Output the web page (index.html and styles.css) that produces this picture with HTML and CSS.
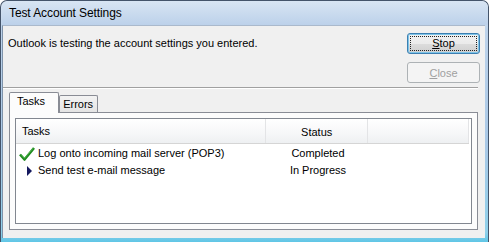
FILE: index.html
```html
<!DOCTYPE html>
<html>
<head>
    <title>Test Account Settings</title>
    <link rel="stylesheet" href="styles.css">
</head>
<body>

    <div class="window">
        <div class="titlebar">Test Account Settings</div>

        <div class="client">
            <div class="top">
                <p class="message">Outlook is testing the account settings you entered.</p>
                <div class="buttons">
                    <button class="btn default"><span class="focus"><u>S</u>top</span></button>
                    <button class="btn" disabled><u>C</u>lose</button>
                </div>
            </div>

            <div class="separator"></div>

            <div class="tabs">
                <div class="tab active">Tasks</div>
                <div class="tab">Errors</div>
            </div>

            <div class="panel">
                <div class="list">
                    <div class="list-head">
                        <div class="col-task">Tasks</div>
                        <div class="col-status">Status</div>
                        <div class="col-rest"></div>
                    </div>
                    <div class="row">
                        <div class="col-task">
                            <svg class="icon" width="16" height="16" viewBox="0 0 16 16">
                                <path d="M1 8.5 L5.5 13.5 L15 2" fill="none" stroke="#1f8a1f" stroke-width="2.6" stroke-linejoin="round"/>
                                <path d="M1.8 8.3 L5.5 12.3 L14.3 1.9" fill="none" stroke="#5cc25c" stroke-width="0.8"/>
                            </svg>
                            Log onto incoming mail server (POP3)
                        </div>
                        <div class="col-status">Completed</div>
                    </div>
                    <div class="row">
                        <div class="col-task">
                            <svg class="icon" width="16" height="16" viewBox="0 0 16 16">
                                <path d="M8 3 L13 8 L8 13 Z" fill="#14185e"/>
                            </svg>
                            Send test e-mail message
                        </div>
                        <div class="col-status">In Progress</div>
                    </div>
                </div>
            </div>
        </div>
    </div>

</body>
</html>
```

FILE: styles.css
```css
body {
    margin: 0;
    font-family: "Liberation Sans", Arial, sans-serif;
    font-size: 11px;
    color: #000;
    background: #fff;
}
.window {
    width: 489px;
    height: 242px;
    box-sizing: border-box;
    border: 1px solid #44546a;
    border-bottom: none;
    border-radius: 7px 7px 0 0;
    background: linear-gradient(#dce7f4, #bcd2ea 12%, #a9c8e6 60%, #8fd0ea 96%, #5fc6e6);
    padding: 0 3px 4px 1px;
    display: flex;
    flex-direction: column;
    overflow: hidden;
}
.titlebar {
    height: 24px;
    line-height: 24px;
    padding-left: 7px;
    font-size: 12px;
    letter-spacing: -0.1px;
    color: #000;
    background: linear-gradient(#d8e5f3, #bcd1ea);
    border-radius: 6px 6px 0 0;
    margin-right: -3px;
}
.client {
    flex: 1;
    background: #f0f0f0;
    border-top: 1px solid #aab9cc;
    border-left: 1px solid #7f93aa;
    display: flex;
    flex-direction: column;
}
.top {
    display: flex;
    justify-content: space-between;
    padding: 7px 5px 0 5px;
}
.message {
    margin: 4px 0 0 0;
}
.buttons {
    display: flex;
    flex-direction: column;
    gap: 8px;
}
.btn {
    width: 73px;
    height: 21px;
    padding: 0;
    font-family: inherit;
    font-size: 11px;
    color: #000;
    border: 1px solid #707070;
    border-radius: 3px;
    background: linear-gradient(#f2f2f2, #ebebeb 50%, #dddddd 51%, #cfcfcf);
}
.btn.default {
    border-color: #3c7fb1;
    box-shadow: inset 0 0 0 1px #7ec4e8;
    padding: 2px;
}
.btn .focus {
    display: block;
    height: 100%;
    box-sizing: border-box;
    border: 1px dotted #222;
    line-height: 13px;
}
.btn[disabled] {
    color: #a0a0a0;
    border-color: #adb2b5;
    background: #f4f4f4;
}
.separator {
    margin: 4px 7px 0 0;
    border-top: 1px solid #a0a0a0;
    border-bottom: 1px solid #fff;
}
.tabs {
    display: flex;
    align-items: flex-end;
    margin: 3px 0 0 6px;
    height: 20px;
    position: relative;
    z-index: 1;
}
.tab {
    height: 16px;
    line-height: 17px;
    padding: 0 4px 0 3px;
    border: 1px solid #898c95;
    border-bottom: none;
    background: linear-gradient(#f3f3f3, #e4e4e4);
    border-radius: 2px 2px 0 0;
}
.tab.active {
    height: 20px;
    line-height: 17px;
    padding: 0 13px 0 7px;
    background: #fcfcfc;
    margin-bottom: -1px;
}
.panel {
    margin: 0 7px 0 6px;
    height: 118px;
    box-sizing: border-box;
    border: 1px solid #898c95;
    background: #fcfcfc;
    padding: 5px;
}
.list {
    height: 100%;
    box-sizing: border-box;
    border: 1px solid #828790;
    background: #fff;
}
.list-head {
    display: flex;
    height: 24px;
    line-height: 26px;
    margin-right: 2px;
    background: linear-gradient(#ffffff, #f6f7f8 60%, #eef0f2);
    border-bottom: 1px solid #d5d5d5;
}
.list-head div {
    border-right: 1px solid #e3e4e6;
}
.list-head .col-task {
    padding-left: 6px;
}
.col-task {
    width: 251px;
    box-sizing: border-box;
    display: flex;
    align-items: center;
}
.col-status {
    width: 102px;
    text-align: center;
}
.col-rest {
    width: 100px;
}
.row {
    display: flex;
    height: 17px;
    line-height: 17px;
}
.list-head + .row {
    margin-top: 1px;
}
.row .col-task {
    padding-left: 3px;
}
.icon {
    margin-right: 3px;
    flex: none;
}
```
